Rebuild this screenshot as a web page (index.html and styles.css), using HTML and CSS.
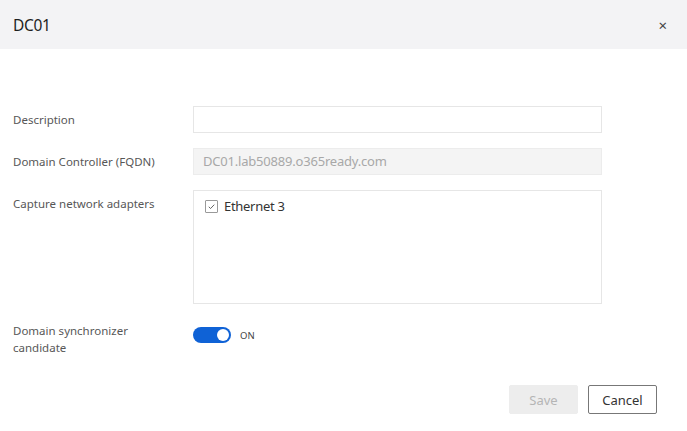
FILE: index.html
```html
<!DOCTYPE html>
<html>
<head>
<meta charset="utf-8">
<link rel="stylesheet" href="styles.css">
</head>
<body>
<div class="dialog">
  <div class="header">
    <span class="title">DC01</span>
    <span class="close">×</span>
  </div>
  <div class="form">
    <div class="row">
      <div class="label">Description</div>
      <div class="input"></div>
    </div>
    <div class="row">
      <div class="label">Domain Controller (FQDN)</div>
      <div class="input disabled">DC01.lab50889.o365ready.com</div>
    </div>
    <div class="row top">
      <div class="label">Capture network adapters</div>
      <div class="listbox">
        <div class="item">
          <span class="check">
            <svg width="12" height="12" viewBox="0 0 12 12"><path d="M3 6.3 L5 8.2 L9 4" fill="none" stroke="#555" stroke-width="1"/></svg>
          </span>
          <span>Ethernet 3</span>
        </div>
      </div>
    </div>
    <div class="row top sync">
      <div class="label">Domain synchronizer<br>candidate</div>
      <div class="toggle-wrap">
        <span class="toggle"><span class="knob"></span></span>
        <span class="on">ON</span>
      </div>
    </div>
  </div>
  <div class="footer">
    <button class="btn save">Save</button>
    <button class="btn cancel">Cancel</button>
  </div>
</div>
</body>
</html>
```
FILE: styles.css
```css
html, body {
  margin: 0;
  padding: 0;
  background: #fff;
  font-family: "Noto Sans", "Open Sans", sans-serif;
}
.dialog {
  width: 687px;
  height: 431px;
  display: flex;
  flex-direction: column;
}
.header {
  height: 49px;
  background: #f3f3f5;
  display: flex;
  align-items: center;
  justify-content: space-between;
  padding: 0 20px 0 13px;
}
.title {
  font-size: 15.5px;
  color: #1f1f1f;
  letter-spacing: -0.3px;
}
.close {
  font-size: 15px;
  color: #444;
}
.form {
  padding: 57px 0 0 13px;
  display: flex;
  flex-direction: column;
}
.row {
  display: grid;
  grid-template-columns: 180px 409px;
  align-items: center;
  margin-bottom: 15px;
}
.row.top {
  align-items: start;
}
.label {
  font-size: 11.5px;
  color: #575757;
  line-height: 17px;
}
.row.top .label {
  padding-top: 5px;
}
.input {
  height: 25px;
  border: 1px solid #e6e6e6;
  box-sizing: content-box;
  font-size: 13px;
  color: #a8a8a8;
  line-height: 25px;
  padding-left: 9px;
  letter-spacing: -0.2px;
}
.input.disabled {
  background: #f4f4f4;
  border-color: #ececec;
}
.listbox {
  border: 1px solid #e6e6e6;
  padding: 6px 0 0 11px;
  box-sizing: border-box;
  height: 114px;
}
.item {
  display: flex;
  align-items: center;
  gap: 6px;
  font-size: 13px;
  color: #333;
  letter-spacing: -0.3px;
}
.check {
  width: 11px;
  height: 11px;
  border: 1px solid #999;
  border-radius: 1px;
  display: flex;
  align-items: center;
  justify-content: center;
}
.check svg {
  width: 11px;
  height: 11px;
}
.sync {
  margin-top: -2px;
}
.sync .label {
  padding-top: 0;
  line-height: 17px;
}
.toggle-wrap {
  display: flex;
  align-items: center;
  gap: 9px;
  padding-top: 10px;
}
.toggle {
  width: 38px;
  height: 16px;
  border-radius: 8px;
  background: #0f62d6;
  position: relative;
  display: inline-block;
}
.knob {
  position: absolute;
  right: 2px;
  top: 2px;
  width: 12px;
  height: 12px;
  border-radius: 50%;
  background: #fff;
}
.on {
  font-size: 9.5px;
  color: #444;
}
.footer {
  display: flex;
  justify-content: flex-end;
  gap: 10px;
  padding: 14px 30px 0 0;
}
.btn {
  font-family: "Noto Sans", "Open Sans", sans-serif;
  font-size: 13px;
  height: 29px;
  box-sizing: border-box;
  border-radius: 2px;
  padding: 0;
}
.save {
  width: 69px;
  background: #ededed;
  border: 1px solid #ededed;
  color: #b5b5b5;
}
.cancel {
  width: 69px;
  background: #fff;
  border: 1px solid #777;
  color: #333;
}
```
